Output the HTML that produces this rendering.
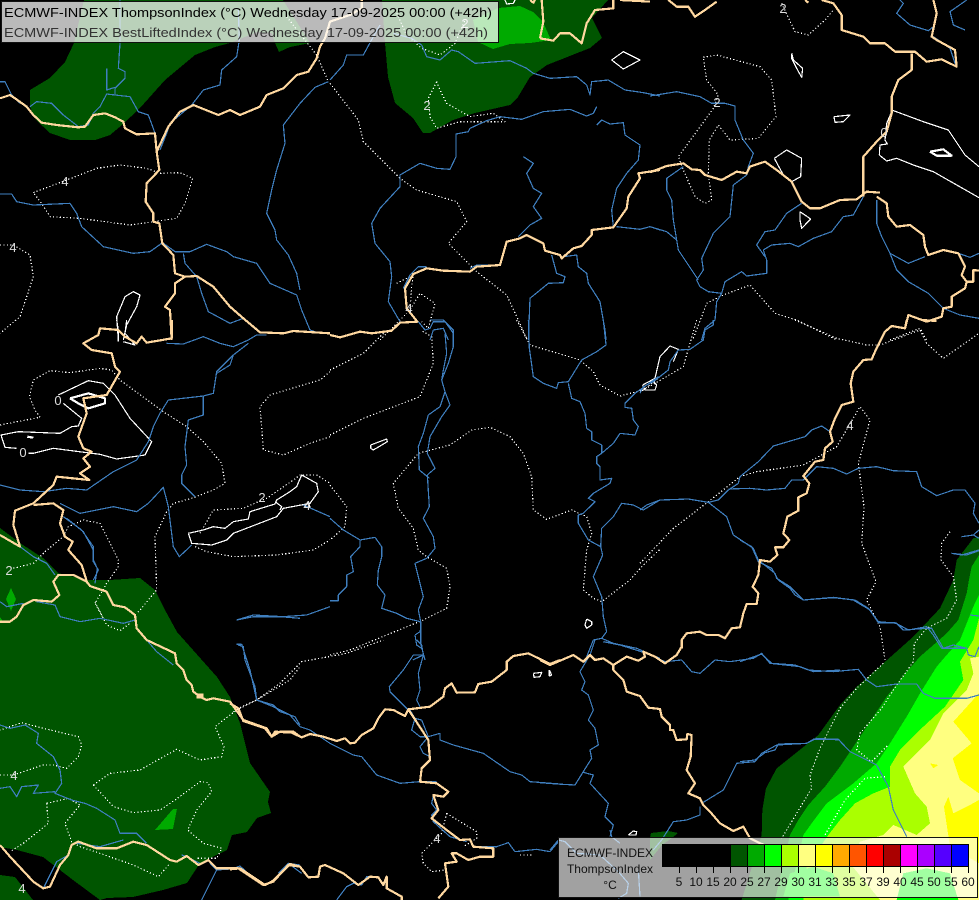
<!DOCTYPE html>
<html><head><meta charset="utf-8"><title>ECMWF-INDEX ThompsonIndex</title>
<style>
html,body{margin:0;padding:0;background:#000;width:979px;height:900px;overflow:hidden}
svg{display:block;position:absolute;left:0;top:0}
path{fill:none;vector-effect:non-scaling-stroke;stroke-linejoin:round;shape-rendering:crispEdges}
.d path{stroke:#fff;stroke-width:1.2;stroke-dasharray:1.2 2.2}
.s path{stroke:#fff;stroke-width:1.2}
.t path{stroke:#fff;stroke-width:2.2}
.r path{stroke:#3f7fbf;stroke-width:1.2}
.b path{stroke:#ffd8a0;stroke-width:2.2}
text{font-family:"Liberation Sans",sans-serif}
.l text{font-size:13px;fill:#ddd;text-anchor:middle}
.g text{font-size:12px;fill:#111;text-anchor:middle}
</style></head><body>
<svg width="979" height="900" viewBox="0 0 979 900" xmlns="http://www.w3.org/2000/svg">
<rect width="979" height="900" fill="#000"/>
<!-- fills -->
<g shape-rendering="crispEdges">
<polygon fill="#005500" points="84,0 74,43 65,62 50,78 30,90 30,107 36,120 50,133 70,140 95,140 110,135 122,125 140,108 165,80 195,55 215,47 230,43 257,32 272,33 275,43 279,52 290,47 310,43 283,0"/>
<polygon fill="#005500" points="382,0 385,43 388,77 395,103 413,118 423,133 430,133 453,120 475,113 510,105 518,97 530,77 547,65 590,48 602,38 592,18 608,0"/>
<polygon fill="#00aa00" points="473,20 498,8 520,6 533,12 543,22 551,40 530,43 510,44 493,49 478,42"/>
<polygon fill="#005500" points="0,528 20,543 43,558 58,573 87,580 110,580 140,578 155,590 165,610 177,632 217,677 230,697 240,723 250,763 270,792 268,802 271,813 257,818 247,832 232,835 227,850 200,863 187,883 163,890 133,897 107,898 100,900 73,880 43,857 17,850 0,847"/>
<polygon fill="#005500" points="0,875 15,877 33,900 0,900"/>
<polygon fill="#00aa00" points="155,830 173,809 177,809 173,829"/>
<polygon fill="#00aa00" points="11,588 16,599 11,611 6,599"/>
<polygon fill="#00aa00" points="0,617 2,620 0,622"/>
<polygon fill="#005500" points="651,833 668,831 678,833 672,838 662,845 650,860 650,838"/>
<g transform="translate(740,530) scale(.33333)">
<polygon fill="#005500" points="717,20 700,25 650,90 640,150 600,235 520,320 430,400 350,470 300,525 235,615 110,715 78,775 67,840 65,915 5,1110 717,1110"/>
<polygon fill="#00aa00" points="717,75 695,110 685,160 680,190 655,270 620,310 540,380 500,425 440,500 390,575 330,665 300,710 255,770 205,825 175,870 150,915 105,1110 717,1110"/>
<polygon fill="#00ff00" points="717,195 700,230 690,255 660,330 620,375 590,410 540,490 500,560 450,640 410,700 340,760 260,820 215,880 190,915 145,1110 717,1110"/>
<polygon fill="#aaff00" points="717,265 700,330 660,395 670,450 615,530 550,590 480,660 450,710 450,770 400,790 345,820 300,870 265,915 200,1010 190,1110 717,1110"/>
<polygon fill="#ffff80" points="717,380 690,385 700,430 680,480 610,550 570,630 490,710 525,790 560,830 570,880 530,915 460,885 430,915 360,935 330,1000 420,1110 717,1110"/>
<polygon fill="#ffff00" points="717,490 640,575 695,640 638,685 660,750 717,790"/>
<polygon fill="#ffff00" points="625,800 640,850 690,825 717,810 717,1000 630,950 612,830"/>
<polygon fill="#ffff00" points="570,700 595,705 580,715"/>
</g>
<g transform="translate(550,830) scale(.33333)">
<polygon fill="#00ff00" points="700,200 720,130 790,110 850,130 870,200"/>
<polygon fill="#00ff00" points="1040,210 1060,130 1130,115 1200,130 1225,210"/>
</g>
</g>
<!-- dotted contours -->
<g class="d">
<g transform="translate(0,0) scale(.33333)"><path d="M100 578 200 540 290 505 360 495 440 505 480 520 540 518 578 535 555 610 530 655 390 675 240 655 150 650 125 610 100 578M0 735 40 735 90 765 100 830 60 950 0 1000M860 50 950 165 985 245"/></g>
<g transform="translate(330,0) scale(.33333)"><path d="M0 250 85 360 100 425 210 535 260 570 380 605 410 665 355 730 440 815 530 885 590 1015M200 850 250 825 245 860 240 930 270 880 315 910 295 985 275 965M150 1020 230 940M200 40 230 105 275 145 330 165 375 130 405 60M320 245 295 295 300 350 320 385 390 365 525 365 490 340 420 350 350 310 330 270 320 245"/></g>
<g transform="translate(650,0) scale(.33333)"><path d="M160 172 200 165 330 200 365 240 378 350 325 415 240 420 205 375 178 420 175 520 185 600 165 610 135 590 100 510 85 470 190 325 205 285 170 240 160 172M395 10 435 95 475 105 525 60 550 30M130 1015 170 910 220 885 300 855 375 940 440 960 560 1020M720 1020 810 985 830 1020"/></g>
<g transform="translate(0,320) scale(.33333)"><path d="M0 315 120 292 105 270 88 230 100 180 150 152 210 158 300 145 335 150 360 180 490 275 560 320 610 365 665 430 675 490 640 510 575 535 520 550 500 575 465 650 470 810 420 870 410 880M990 350 930 370 850 405 790 390 780 260 810 225 960 180 990 155M585 680 620 695 700 710 830 705 940 690 990 660M600 640 640 570 730 565 775 545 800 535 880 480 900 465 950 465 990 490M135 695 190 650 205 620 250 600 300 610 355 720 355 740 320 790 285 850 310 895M40 745 100 730 135 695"/></g>
<g transform="translate(0,500) scale(.33333)"><path d="M285 305 300 335 320 375 360 392 390 370M0 825 40 825 130 795 160 795 200 805 235 770 245 735 235 710 130 685 65 668 0 690M140 910 205 895 240 915 195 970 215 1025 240 1040 300 1060 400 1095 475 1130 510 1090M140 910 145 970 70 1030 30 1055M280 855 330 820 420 810 530 748 600 780 665 770 672 740 645 680 690 645 725 620 770 600 870 540 900 500M280 855 340 920 400 938 480 930 525 900 600 845 625 848 635 875 590 930 563 990 610 1030 665 1045 650 1075 590 1075"/></g>
<g transform="translate(230,640) scale(.33333)"><path d="M10 215 80 180 150 130 215 65 350 40 460 0M650 520 740 575 740 595 700 620M650 520 635 580 575 640 580 670 605 695 645 690M870 645 910 645"/></g>
<g transform="translate(330,320) scale(.33333)"><path d="M0 1005 60 990 280 900 350 865 360 800 350 745 290 710 265 690 250 625 205 565 190 490 265 400 360 375 425 330 480 322 540 350 580 400 605 470 610 570 650 598 725 570 770 590 785 640 770 690 760 810 790 835 815 845 900 780 940 735 990 688M0 495 50 560 45 620 0 660M0 345 100 295 270 230 310 130 305 50 272 30M0 150 100 100 170 30M560 0 600 75 750 120 790 155 810 195 870 228 940 210 985 175"/></g>
<g transform="translate(640,320) scale(.33333)"><path d="M170 0 130 140 45 190 0 215M465 0 590 55 680 75 720 75 840 30 860 70 910 115 1017 40M0 730 100 625 205 545 300 470 350 455 490 435 590 380 660 260 690 300 655 430 672 560 665 670 708 785 680 840 720 920 735 1020"/></g>
<g transform="translate(740,530) scale(.33333)"><path d="M630 5 605 40 603 90 640 140 650 210 620 265 560 295 523 340 520 395 460 480 425 535 360 610 350 660 395 695 445 645M435 740 375 745 315 810 255 915M430 400 350 475 300 535 240 655 210 735 215 775 125 925"/></g>
</g>
<!-- solid contours -->
<g class="s">
<g transform="translate(0,0) scale(.33333)"><path d="M350 950 375 890 400 875 420 885 410 920 380 975 370 1020M350 950 355 1020"/></g>
<g transform="translate(330,0) scale(.33333)"><path d="M845 180 880 155 930 180 880 207 845 180M525 0 530 12 550 10 555 0"/></g>
<g transform="translate(650,0) scale(.33333)"><path d="M425 160 430 180 458 205 455 232 440 205 425 175 425 160M552 350 600 345 580 365 555 367 552 350M373 475 410 450 455 475 452 530 425 545 400 525 373 475M450 635 482 657 455 685 450 660 450 635M725 330 820 365 895 390 945 465 987 500M725 335 710 370 705 420 712 432 690 435 688 465 710 483 740 475 790 495 850 515 987 593"/></g>
<g transform="translate(0,320) scale(.33333)"><path d="M355 65 355 30 350 0M380 0 375 40 405 75 370 65M175 225 265 182 310 190 345 225 390 295 455 365 435 405 350 417 300 403 160 385 100 400 85 400M50 385 15 382 3 345 55 335 180 340 215 320 235 318 245 295 190 250M565 640 610 630 640 620 675 625 700 605 745 597 750 575 825 552 830 540 870 515 890 500 905 465 950 490 955 515 930 550 850 565 830 590 765 615 700 640 680 660 635 675 575 670 565 640M825 545 845 560 840 570M915 560 925 545 930 562 915 562"/></g>
<g transform="translate(330,320) scale(.33333)"><path d="M122 375 170 357 172 365 130 390 122 385 122 375M770 897 785 905 785 915 770 925 765 915 770 897"/></g>
<g transform="translate(640,320) scale(.33333)"><path d="M8 195 45 175 60 110 90 78 115 88 100 125M8 195 15 210 45 210 50 195 40 185"/></g>
<g transform="translate(230,640) scale(.33333)"><path d="M910 100 935 97 930 110 912 112 910 100M958 90 965 105 958 108 958 90"/></g>
<g transform="translate(550,830) scale(.33333)"><path d="M235 15 250 3 260 5 258 15 235 15"/></g>
</g>
<g class="t">
<g transform="translate(0,320) scale(.33333)"><path d="M210 235 265 220 315 235 315 250 265 265 235 250 210 235M82 350 100 353"/></g>
<g transform="translate(650,0) scale(.33333)"><path d="M840 455 880 448 905 467 860 467 840 455"/></g>
</g>
<!-- rivers -->
<g class="r">
<g transform="translate(0,0) scale(.33333)"><path d="M0 245 15 245 35 285 60 310M90 320 110 305 155 310 190 345 235 380 265 375 280 340 300 320 320 282 345 285 390 290 415 335 445 345 458 380 465 400M345 285 345 265 375 235 375 215 355 205 360 130 360 0M320 205 320 270 345 262M480 450 500 400 510 370 575 315 610 270 660 255 665 210 710 170 718 120 715 30M0 582 35 582 50 605 100 615 210 610 230 640 245 680 310 740 400 760 450 755 485 730M490 730 525 755 570 755 620 733 680 755 700 770 770 790 810 850 890 885 905 930 930 990 960 1000M550 760 555 790 590 830 605 880 625 935 690 970 730 955M985 245 945 262 900 310 850 375 855 430 830 510 815 570 800 640 825 690 830 720 865 765 890 820 900 870"/></g>
<g transform="translate(330,0) scale(.33333)"><path d="M0 240 40 195 50 165 100 165 130 110 150 75M190 100 245 115 275 135 290 170 330 180 365 150 385 155 435 190 540 182 590 205 610 220 660 235 740 230 770 255 780 285 785 245 835 240 885 270 940 278 990 288M800 320 790 340 770 348 720 328 640 335 575 358 510 350 470 362 420 385 415 395 378 402 378 470 360 508 320 505 270 490 210 525 210 560 150 625 125 670 135 730 180 785 185 830 175 905 210 965M800 375 815 360 840 372 880 368 885 405 930 435 925 480 890 520 860 565 845 630 850 680M580 470 610 490 590 520 610 565 635 580 610 620 635 655 600 675 565 710M665 765 680 820 705 830 700 848 655 850 600 895 595 1020M700 770 740 765 745 800 770 820 775 850 810 905 825 990 828 1020M860 680 930 688 960 680 990 690M420 805 440 795 510 795M265 965 285 990 300 985 310 965 345 965 370 1000 370 1020M300 1020 310 990 340 985 355 1020M220 865 240 825 265 800 290 800"/></g>
<g transform="translate(650,0) scale(.33333)"><path d="M0 288 80 275 150 290 185 310 225 310 255 318 255 360 280 420 310 460 295 500 290 525 250 555 240 650 190 700 155 775 160 810 140 840 150 860 175 875 215 880 225 845 275 815 290 828 350 820 350 780 340 750 365 735 420 730 445 740 490 715 545 695 580 650 610 645 640 590M0 680 50 695 80 720 85 750 125 810 145 840M100 500 50 535 50 570 65 600 70 660 80 720M455 610 410 640 375 690 345 695 320 735 345 770M215 880 200 905 195 960 165 985 155 1020M680 600 680 670 695 710 720 760 775 790 825 770M720 760 740 810 775 845 835 880 880 925 930 945 987 955M925 760 960 772 987 760M750 0 760 10 740 40 780 75 835 92 850 80 845 110M950 0 900 35 910 75 945 90M850 110 900 145 915 190 920 200"/></g>
<g transform="translate(0,320) scale(.33333)"><path d="M500 70 550 72 610 50 660 70 700 80 745 60 770 45 800 45M745 70 700 105 650 155 640 220 610 228 505 240 480 280 460 320 445 365 410 420 340 455 260 510 200 505 130 515 60 510 0 495M700 105 690 135 650 160M610 230 610 285 565 300 555 380 560 435 545 465 545 490 585 530M180 550 240 580 340 560 410 575 445 550 490 502 505 560 520 680 538 710 575 675M190 590 245 630 280 680 280 720 292 745 285 790M910 555 990 590M710 900 760 885 850 890 920 885 990 860"/></g>
<g transform="translate(0,500) scale(.33333)"><path d="M60 140 100 170 140 190 165 225M0 305 20 320 70 310M110 305 165 315 180 350 240 365 300 355 370 370 405 360M440 420 470 455 520 495M0 675 30 685 75 675 115 700 110 730 160 770 180 810 185 850 165 880 215 900 255 910 290 925 345 960 360 1000 410 1000 440 1030M0 865 30 860 50 890 65 860 115 855 100 880 165 875M130 1165 170 1085 205 1065M230 1030 300 1040 370 1020M545 1065 560 1070 600 1090M630 1090 650 1110 720 1105 790 1150M865 1090 900 1095M650 1110 620 1170 605 1200M200 55 250 95 280 150 280 185 295 210 280 240M710 360 760 350 840 350 900 355M715 435 730 440 735 480 765 560 770 600 820 615 840 635 885 650 900 675"/></g>
<g transform="translate(330,320) scale(.33333)"><path d="M595 0 598 85 610 170 640 190 680 205 685 188 715 185 755 120 800 95 828 75 820 0M715 190 725 235 750 245 765 280 770 325 785 335 785 360 815 375 815 400 800 410 800 430 810 440 810 480 845 475 840 490 790 520 775 535 795 545 760 580 745 585 745 610 775 660 812 680 818 705 790 770 815 830 820 890 830 935 815 955 790 960 770 1010M812 680 815 625 850 590 875 550 910 555 940 570 990 540M815 955 850 970 920 985 990 1015M985 170 915 220 885 250 885 262 905 265 910 300 925 320 915 345 870 340 850 370 815 400M300 0 340 0 370 30 370 80 355 130 335 180 345 215 360 255 335 290 300 350 292 400 315 445 292 465 298 560 280 595 310 650 315 685 290 715 255 730 265 770 280 830 265 870 272 905 272 970 285 1020M345 40 350 100 340 150 335 180M345 215 330 260 295 285 280 340 265 380 268 450 298 475M0 595 40 630 90 660 135 652 155 680 155 710 145 750 142 795 165 825 155 865 200 880 230 895 270 905M90 660 90 680 62 710 70 755 50 765 50 800 25 825 25 842 0 842M248 1020 280 1005M255 945 270 935 272 925M255 945 260 975 275 985"/></g>
<g transform="translate(640,320) scale(.33333)"><path d="M220 0 220 15 195 30 190 60 150 88 115 90 90 125 85 150 40 185 10 200 0 220M570 335 545 318 515 330 495 350 400 378 355 425 300 470 295 490 265 510 235 540 205 547 145 537 60 540 20 555 0 570M265 507 330 505 380 510 435 505 455 480 490 480 530 440 580 445 620 462 655 445 710 440 760 452 830 455 845 500 890 527 940 510 975 510 1005 550 1000 580 1017 610M205 547 260 590 280 645 340 685 355 720 405 760 410 775 450 800 490 840 580 832 640 840 690 870 715 908 765 908 805 930 860 920 880 945 905 985 975 985M965 650 1000 645 1017 655M935 700 965 705 1017 690"/></g>
<g transform="translate(740,530) scale(.33333)"><path d="M0 30 35 50 55 95 95 115 115 150 150 175 165 195 190 210 280 203 345 210 385 235 415 275 470 280 490 300 560 295 575 295 610 355 640 345 680 355 685 375 705 380 717 350M0 395 65 372 95 400 165 405 205 420 280 425 355 418 380 450 410 470 470 462 530 462 550 490 585 505 680 505 717 495M0 695 45 690 75 668 105 660 115 642 200 640 220 628 295 628 330 665 360 680 410 705 445 770 460 840 500 920M635 70 680 75 717 62M665 20 700 15 717 0M717 258 690 255"/></g>
<g transform="translate(230,640) scale(.33333)"><path d="M20 13 35 13 60 90 80 180 130 200 180 225 210 260 240 270 300 310 370 345 395 350 440 405 510 430 570 425 620 425M560 0 575 15 580 45 550 45 520 90 478 140 480 155 530 205 555 235 575 240 595 290 630 280 630 300 670 315 760 340 840 395 875 405 900 425 990 432M580 45 565 100 570 150 560 180 570 200M540 210 555 235 545 270 570 290 595 290 570 320 580 340 600 350M610 465 605 490 620 510 605 525 610 545 660 590 710 605M720 595 730 620 800 620 835 608 855 635 920 628 960 635 985 605M5 688 30 678 75 720 105 735M145 700 175 670 215 700M270 680 290 675M320 780 350 740 370 730 395 735 410 710 445 710"/></g>
<g transform="translate(540,640) scale(.33333)"><path d="M165 0 150 45 120 95 135 125 125 150 145 165 160 210 145 240 165 265 175 315 150 330 155 355 130 395 105 435 50 432 0 428M130 397 160 405 150 430 205 490 195 530 220 555 210 590M190 5 240 15 320 40 375 65 425 60 455 95 480 100 525 60 570 65 640 55 665 40 690 70 780 80 820 95 900 90M485 490 550 450 590 370 645 365 665 340 710 315 800 310 830 295 900 300M480 500 480 525 440 540 400 545 365 600 340 630"/></g>
<g transform="translate(550,830) scale(.33333)"><path d="M0 60 25 30 45 35 80 70 150 75 205 125 235 160 230 190 205 205M180 0 185 20 210 40M265 120 270 200"/></g>
</g>
<!-- borders -->
<g class="b">
<g transform="translate(0,0) scale(.33333)"><path d="M0 295 30 285 45 295 80 320 100 345 125 368 170 375 235 382 255 380 280 345 315 340 345 352 370 365 375 385 410 403 465 400 470 455 478 510 440 550 437 605 460 640 460 665 478 670 487 730 520 765 525 820 555 830 590 828 640 860 690 920 730 955 780 997 850 1000 880 993 990 1000M470 455 505 380 540 335 580 315 655 345 690 330 720 345 780 320 800 285 850 265 890 225 925 215 950 175 960 140 975 115 990 65 1050 45 1085 25 1085 0M555 830 525 850 525 880 495 920 510 930 515 1020"/></g>
<g transform="translate(330,0) scale(.33333)"><path d="M0 1005 30 1012 90 995 125 1000 185 992 210 968 262 965 230 925 225 865 250 822 290 805 340 812 420 815 440 800 510 795 530 725 570 715 590 705 640 730 645 752 690 765 695 775 730 745 755 738 785 705 785 690 850 682 890 625 895 590 930 535 925 520 990 510M630 115 640 65 635 0M630 115 670 122 690 100 720 100 755 130 770 70 795 30 850 25 850 0M870 0 960 5M600 0 610 8 615 0"/></g>
<g transform="translate(650,0) scale(.33333)"><path d="M0 517 50 498 100 490 125 508 150 510 165 525 215 540 260 515 290 520 300 500 345 485 380 510 425 545 455 605 480 625 510 625 570 600 620 598 650 575 690 578M640 590 640 470 680 425 710 395 725 340 725 290 745 240 785 210 785 160M515 0 550 10 575 45 575 90 640 110 660 130 705 130 735 155 795 155 830 185 875 178 920 200 915 150 860 120 845 110 860 40 850 0M55 0 80 20 115 20 135 50 165 30 200 5M465 0 475 8M765 985 775 945 830 965 875 950 880 925 905 920 905 890 945 865 950 845 935 825 945 800 925 760 880 750 835 765 825 740 820 705 780 675 740 680 715 650 710 610 680 590M950 845 970 845 970 810 987 812"/></g>
<g transform="translate(0,320) scale(.33333)"><path d="M515 0 515 55 440 68 425 50 410 70 375 50 355 30 300 25 295 45 250 70 275 90 335 100 345 140 360 155 340 190 320 225 250 235 260 280 235 350 250 385 275 395 250 415 270 440 240 460 268 480 170 470 160 495 100 550 45 572 40 615 60 680 0 645M100 555 160 550 190 570 180 610 195 650 218 665 205 690 245 735 262 790"/></g>
<g transform="translate(0,500) scale(.33333)"><path d="M0 365 30 365 50 350 70 315 100 300 155 305 178 285 160 245 175 225 220 225 260 245 270 258 320 275 340 315 375 322 405 345 410 385 440 420 525 460 530 490 550 510 560 540 575 555 580 575 600 590 620 600 640 595 690 605 730 660 800 685 815 710 840 695 880 695 900 710M0 1035 30 1070 100 1145 130 1165 150 1160 180 1095 205 1065 215 1035 235 1025 290 1045 350 1045 400 1025 440 1035 510 1080 530 1085 560 1068 595 1095 625 1080 650 1105 715 1105 790 1155 820 1145 865 1095 900 1100"/><path d="M590 580h20v16h-20z" style="fill:#ffd8a0;stroke-width:0"/></g>
<g transform="translate(230,640) scale(.33333)"><path d="M0 190 25 205 40 243 105 265 125 290 135 275 185 278 215 292 240 282 280 290 320 303 345 295 360 310 375 308 395 285 430 265 445 235 465 208 490 210 525 228 535 208 600 200 640 170 645 145 665 130 680 158 735 157 745 132 785 125 830 90 830 65 850 48 895 40 960 72 990 60M535 208 595 300 600 360 575 385 570 425 620 430 655 455 640 470 610 465 625 510 605 535 650 570 690 600 720 598 730 620 790 625 790 650 750 650 715 660 680 640 665 640 680 665 645 670 655 740 625 775M0 688 30 685 105 735 130 722 180 672 210 680 235 712 265 710 270 680 285 675 340 700 385 735 420 710 445 712 460 735 470 710 470 745 515 770 515 780"/></g>
<g transform="translate(640,320) scale(.33333)"><path d="M845 0 890 3M800 0 795 25 755 18 735 35 705 95 695 118 670 120 640 155 632 190 640 245 605 255 585 295 570 335 578 365 555 385 550 420 525 425 490 468 508 490 500 520 475 532 475 572 442 590 430 640 448 660 430 682 405 682 412 705 390 725 360 720 355 765 338 800 355 820 350 852 320 852 310 880 300 922 275 925 255 955 235 945 200 945 180 935 140 940 125 960 125 985"/></g>
<g transform="translate(540,640) scale(.33333)"><path d="M0 60 30 75 100 45 130 65 150 45 165 60 190 55 220 75 260 50 295 62 315 50 310 35 345 50 375 70 410 45 425 20 425 0M220 75 220 90 250 120 260 155 300 168 325 203 360 207 365 230 390 255 390 270 400 270 410 300 440 298 442 282 455 285 452 350 440 390 465 430 445 460 480 475 490 495 510 515 540 550 580 573 610 560 630 595 660 610 700 625"/></g>
</g>
<!-- contour labels -->
<g class="l">
<text x="65" y="186">4</text><text x="13" y="252">4</text><text x="9" y="575">2</text><text x="14" y="780">4</text>
<text x="427" y="110">2</text><text x="717" y="107">2</text><text x="884" y="137">0</text><text x="850" y="430">4</text>
<text x="58" y="405">0</text><text x="23" y="457">0</text><text x="262" y="502">2</text><text x="307" y="510">4</text>
<text x="437" y="843">4</text><text x="22" y="893">4</text><text x="783" y="13">2</text><text x="465" y="28">2</text><text x="409" y="313">4</text>
</g>
<!-- header -->
<rect x="1.5" y="1.5" width="497" height="41" fill="#fff" fill-opacity=".73" stroke="#111" stroke-width="1" shape-rendering="crispEdges"/>
<text x="4" y="17" font-size="13px" fill="#000" textLength="488" lengthAdjust="spacingAndGlyphs">ECMWF-INDEX ThompsonIndex (°C) Wednesday 17-09-2025 00:00 (+42h)</text>
<text x="4" y="37" font-size="13px" fill="#333" textLength="484" lengthAdjust="spacingAndGlyphs">ECMWF-INDEX BestLiftedIndex (°C) Wednesday 17-09-2025 00:00 (+42h)</text>
<!-- legend -->
<rect x="558.5" y="837.5" width="419" height="60" fill="#fff" fill-opacity=".63" stroke="#111" stroke-width="1" shape-rendering="crispEdges"/>
<g shape-rendering="crispEdges">
<rect x="662" y="844" width="68" height="23" fill="#000"/>
<rect x="730" y="844" width="17" height="23" fill="#005500"/>
<rect x="747" y="844" width="17" height="23" fill="#00aa00"/>
<rect x="764" y="844" width="17" height="23" fill="#00ff00"/>
<rect x="781" y="844" width="17" height="23" fill="#aaff00"/>
<rect x="798" y="844" width="17" height="23" fill="#ffff80"/>
<rect x="815" y="844" width="17" height="23" fill="#ffff00"/>
<rect x="832" y="844" width="17" height="23" fill="#ffaa00"/>
<rect x="849" y="844" width="17" height="23" fill="#ff5500"/>
<rect x="866" y="844" width="17" height="23" fill="#ff0000"/>
<rect x="883" y="844" width="17" height="23" fill="#aa0000"/>
<rect x="900" y="844" width="17" height="23" fill="#ff00ff"/>
<rect x="917" y="844" width="17" height="23" fill="#aa00ff"/>
<rect x="934" y="844" width="17" height="23" fill="#5500ff"/>
<rect x="951" y="844" width="17" height="23" fill="#0000ff"/>
<path style="stroke:#000;stroke-width:1" d="M662.5 844.5H968.5V866.5H662.5ZM679.5 844V873M696.5 844V873M713.5 844V873M730.5 844V873M747.5 844V873M764.5 844V873M781.5 844V873M798.5 844V873M815.5 844V873M832.5 844V873M849.5 844V873M866.5 844V873M883.5 844V873M900.5 844V873M917.5 844V873M934.5 844V873M951.5 844V873M968.5 844V873"/>
</g>
<g class="g">
<text x="610" y="857">ECMWF-INDEX</text><text x="610" y="873">ThompsonIndex</text><text x="610" y="889">°C</text>
<text x="679" y="886">5</text><text x="696" y="886">10</text><text x="713" y="886">15</text><text x="730" y="886">20</text><text x="747" y="886">25</text><text x="764" y="886">27</text><text x="781" y="886">29</text><text x="798" y="886">30</text><text x="815" y="886">31</text><text x="832" y="886">33</text><text x="849" y="886">35</text><text x="866" y="886">37</text><text x="883" y="886">39</text><text x="900" y="886">40</text><text x="917" y="886">45</text><text x="934" y="886">50</text><text x="951" y="886">55</text><text x="968" y="886">60</text>
</g>
</svg>
</body></html>
